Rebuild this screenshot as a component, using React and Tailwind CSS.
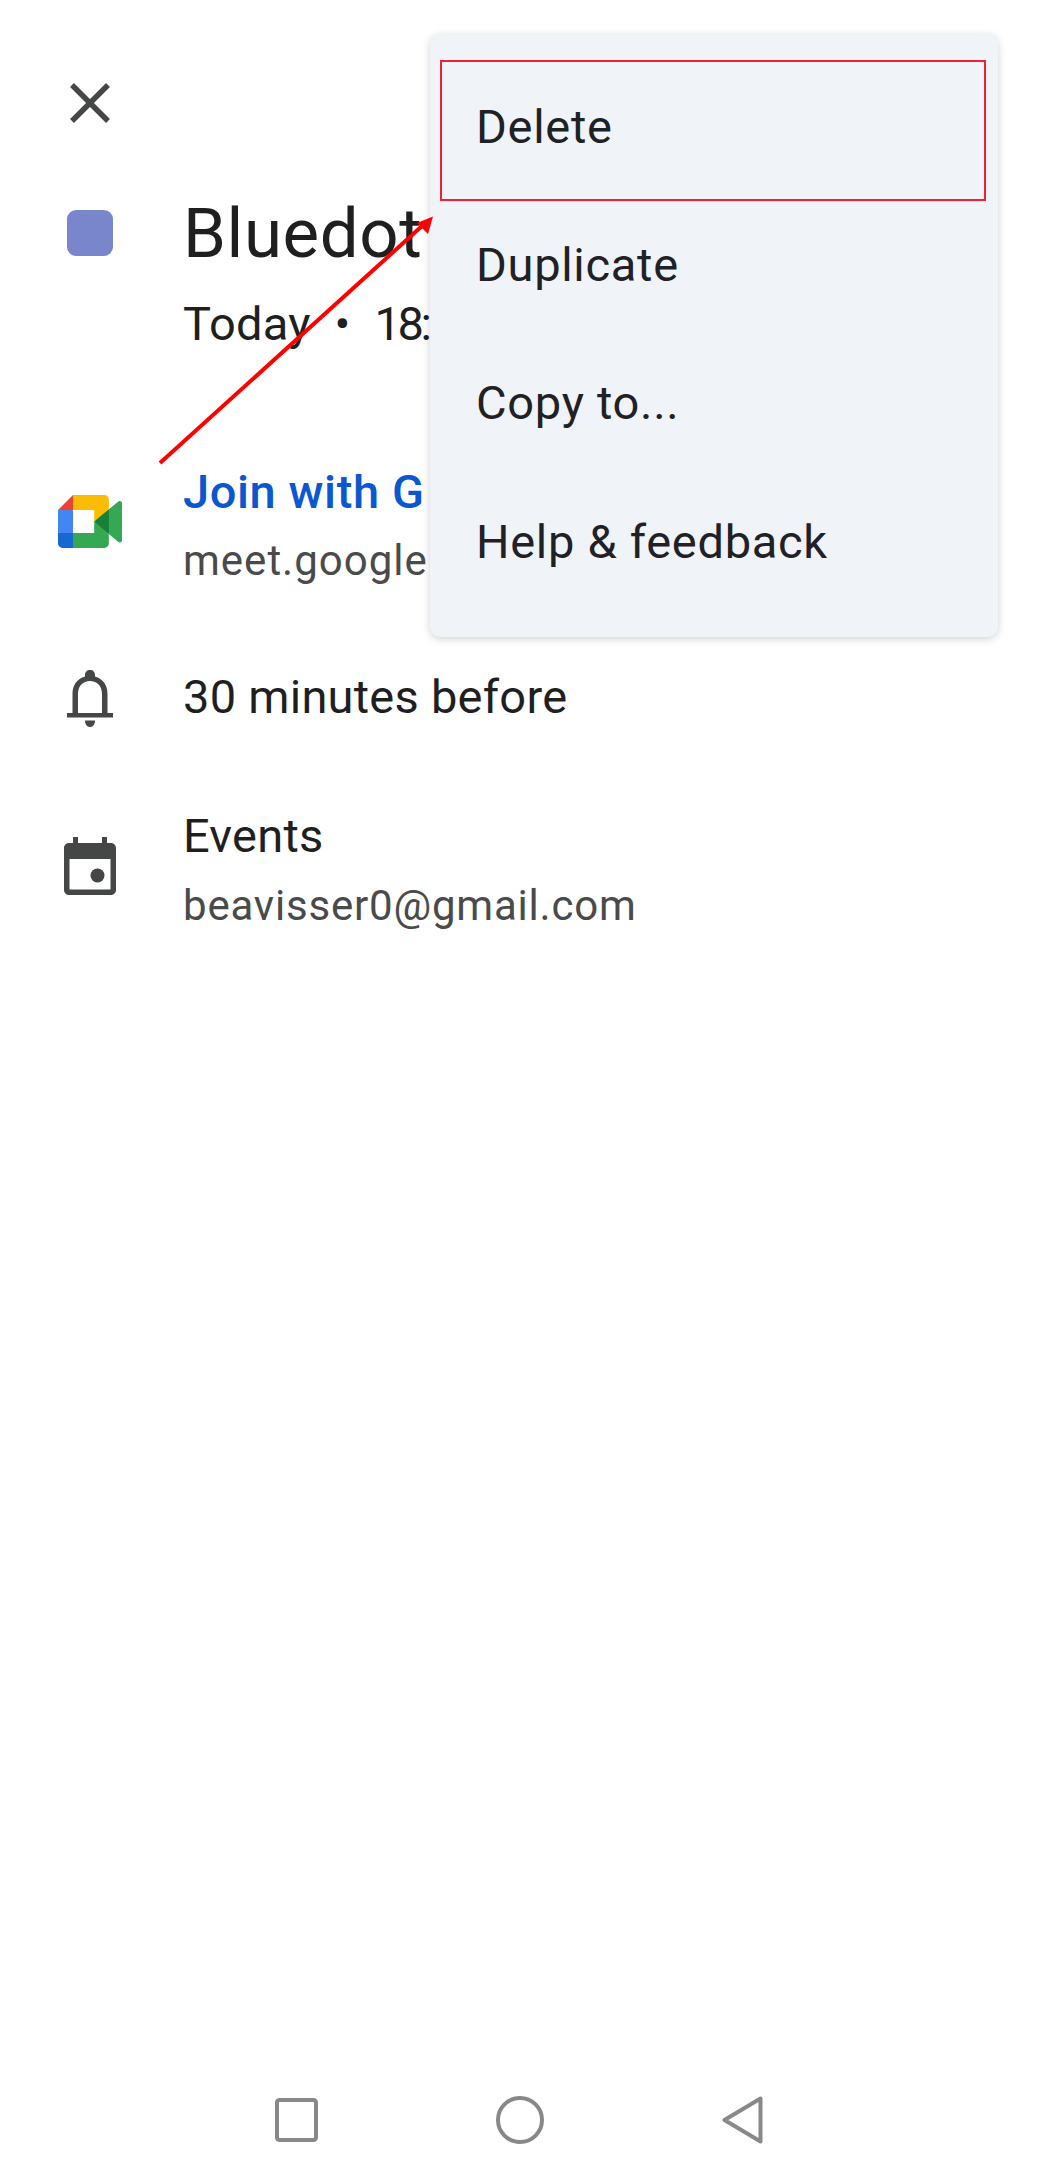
const MENU_ITEMS = ['Delete', 'Duplicate', 'Copy to...', 'Help & feedback']

function MeetIcon() {
  return (
    <svg viewBox="0 0 87.5 72" className="w-[64px] h-[53px]" preserveAspectRatio="none">
      <path fill="#188038" d="M49.5 36l8.53 9.75 11.47 7.33 2-17.02-2-16.64-11.69 6.44z" />
      <path fill="#1967d2" d="M0 51.5V66c0 3.315 2.685 6 6 6h14.5l3-10.96-3-9.54-9.95-3z" />
      <path fill="#ea4335" d="M20.5 0L0 20.5l10.55 3 9.95-3 2.95-9.41z" />
      <path fill="#4285f4" d="M20.5 20.5H0v31h20.5z" />
      <path fill="#34a853" d="M82.6 8.68L69.5 19.42v33.66l13.16 10.79c1.97 1.54 4.85.135 4.85-2.37V11c0-2.535-2.945-3.925-4.91-2.32zM49.5 36v15.5h-29V72h43c3.315 0 6-2.685 6-6V53.08z" />
      <path fill="#fbbc04" d="M63.5 0h-43v20.5h29V36l20-16.57V6c0-3.315-2.685-6-6-6z" />
    </svg>
  )
}

function BellIcon() {
  return (
    <svg viewBox="0 0 46 57" className="w-[46px] h-[57px]" fill="#444746">
      <path fillRule="evenodd" d="M23 0c-3 0-5 2-5 5v1.500C10 9 5.500 15 5.500 24v19H0v4.500h46V43h-5.500V24C40.500 15 36 9 28 6.500V5c0-3-2-5-5-5zm0 11c7 0 12 5 12 13v19H11V24c0-8 5-13 12-13z" />
      <path d="M18 50.500h10c0 4-2.200 6.500-5 6.500s-5-2.500-5-6.500z" />
    </svg>
  )
}

function CalendarIcon() {
  return (
    <svg viewBox="0 0 52 58" className="w-[52px] h-[58px]" fill="#444746">
      <path fillRule="evenodd" d="M9 0h5v6h24V0h5v6h4c2.800 0 5 2.200 5 5v42c0 2.800-2.200 5-5 5H5c-2.800 0-5-2.200-5-5V11c0-2.800 2.200-5 5-5h4V0zM5.500 22v30.500h41V22h-41z" />
      <circle cx="33.500" cy="38.500" r="7" />
    </svg>
  )
}

function IconCell({ children, className = '' }) {
  return <div className={`w-[183px] pr-[3px] flex justify-center shrink-0 ${className}`}>{children}</div>
}

function NavBar() {
  return (
    <div className="mt-auto pb-[16px] pl-[275px] flex items-center gap-[178px]">
      <svg viewBox="0 0 43 44" className="w-[43px] h-[44px]" fill="none" stroke="#888888" strokeWidth="4">
        <rect x="2" y="2" width="39" height="40" rx="2.500" />
      </svg>
      <svg viewBox="0 0 48 48" className="w-[48px] h-[48px]" fill="none" stroke="#888888" strokeWidth="4">
        <circle cx="24" cy="24" r="22" />
      </svg>
      <svg viewBox="0 0 41 48" className="w-[41px] h-[48px]" fill="none" stroke="#888888" strokeWidth="4" strokeLinejoin="round">
        <path d="M38.500 2.500v43L2.500 24z" />
      </svg>
    </div>
  )
}

function OverflowMenu() {
  return (
    <div className="absolute left-[430px] top-[34px] w-[568px] h-[603px] pt-[24px] bg-[#f0f3f8] rounded-[10px] shadow-[0_2px_8px_rgba(0,0,0,0.18)]">
      {MENU_ITEMS.map(item => (
        <div key={item} className="h-[138.300px] pl-[46px] flex items-center text-[47px] tracking-[0.7px] text-[#1f2124]">
          {item}
        </div>
      ))}
    </div>
  )
}

export default function App() {
  return (
    <div className="relative w-[1041px] h-[2160px] bg-white overflow-hidden flex flex-col font-['Roboto',sans-serif]">
      <div className="pl-[67px] pt-[80px]">
        <svg viewBox="0 0 46 46" className="w-[46px] h-[46px]" fill="none" stroke="#444746" strokeWidth="5.500">
          <path d="M5 5l36 36M41 5L5 41" />
        </svg>
      </div>

      <div className="flex items-start mt-[68px]">
        <IconCell className="pt-[16px]">
          <div className="w-[46px] h-[46px] rounded-[9px] bg-[#7986cb]" />
        </IconCell>
        <div className="whitespace-nowrap">
          <div className="text-[69px] leading-[80px] tracking-[0.6px] text-[#1f1f1f]">Bluedot</div>
          <div className="mt-[20px] text-[47px] leading-[60px] tracking-[0.25px] text-[#1f1f1f]">
            Today&nbsp; •&nbsp; <span className="tracking-[-3.500px]">18:</span>
          </div>
        </div>
      </div>

      <div className="flex items-center mt-[108px]">
        <IconCell className="mb-[8px]"><MeetIcon /></IconCell>
        <div className="whitespace-nowrap">
          <div className="text-[47px] leading-[60px] font-medium tracking-[0.6px] text-[#0b57d0]">Join with G</div>
          <div className="mt-[11px] text-[42px] leading-[56px] tracking-[1px] text-[#4a4a4a]">meet.google</div>
        </div>
      </div>

      <div className="flex items-center mt-[78px]">
        <IconCell className="mt-[3px]"><BellIcon /></IconCell>
        <div className="text-[47px] leading-[60px] tracking-[0.25px] text-[#1f1f1f]">30 minutes before</div>
      </div>

      <div className="flex items-center mt-[79px]">
        <IconCell className="mb-[8px]"><CalendarIcon /></IconCell>
        <div>
          <div className="text-[47px] leading-[60px] tracking-[0.25px] text-[#1f1f1f]">Events</div>
          <div className="mt-[12px] text-[42px] leading-[56px] tracking-[0.8px] text-[#4a4a4a]">beavisser0@gmail.com</div>
        </div>
      </div>

      <NavBar />
      <OverflowMenu />

      {/* annotation drawn over the screenshot */}
      <div className="absolute left-[440px] top-[60px] w-[546px] h-[141px] border-2 border-[#ee2233]" />
      <svg className="absolute left-0 top-0 w-[1041px] h-[500px] pointer-events-none" viewBox="0 0 1041 500">
        <path d="M160 463L422 226" stroke="#ff0000" strokeWidth="4" />
        <path d="M433 216.500L417 223L428 234z" fill="#ff0000" />
      </svg>
    </div>
  )
}
